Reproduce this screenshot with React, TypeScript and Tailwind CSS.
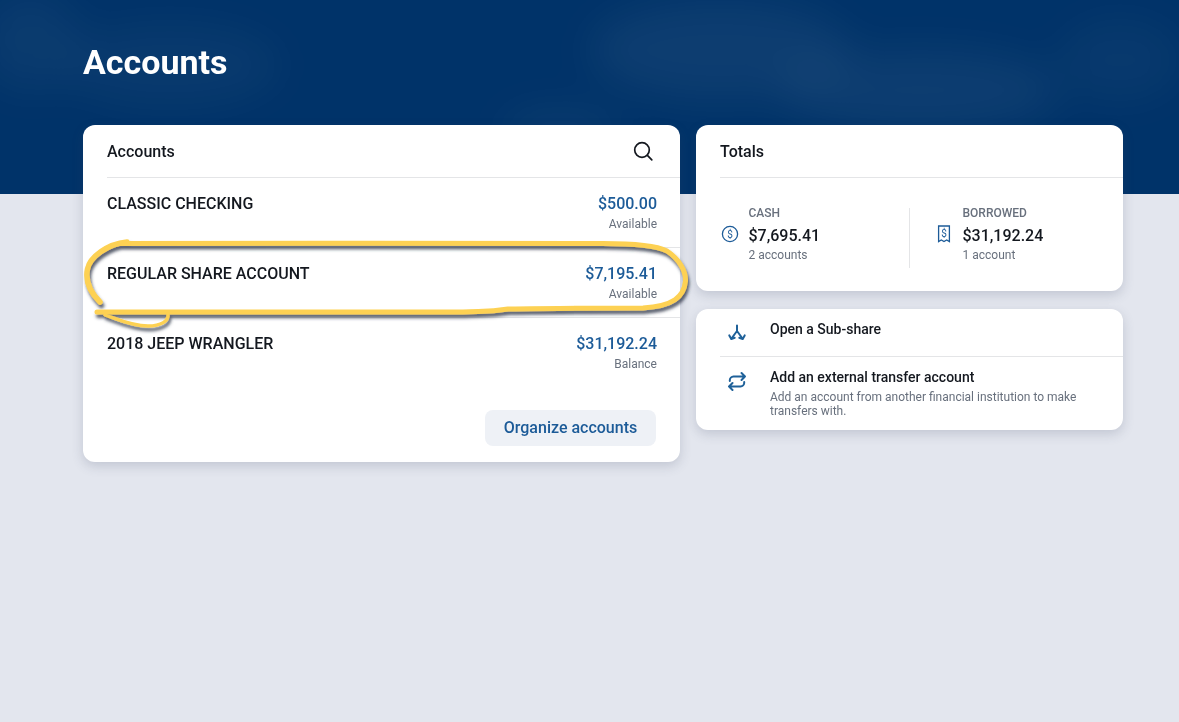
import React from "react";

function Row({ name, amount, label }: { name: string; amount: string; label: string }) {
  return (
    <div className="ml-6 h-[70px] border-b border-[#e4e5e7] last:border-b-0 pr-[23px] pt-[15px] flex justify-between">
      <div className="text-[16px] leading-[22px] font-medium text-[#14181f]">{name}</div>
      <div className="text-right">
        <div className="text-[16px] leading-[22px] font-medium text-[#1c5b98]">{amount}</div>
        <div className="text-[12px] leading-[18px] text-[#68707d]">{label}</div>
      </div>
    </div>
  );
}

function Total({ icon, title, amount, sub }: { icon: React.ReactNode; title: string; amount: string; sub: string }) {
  return (
    <div className="flex items-center mb-2">
      <div className="w-[28.5px] flex-none flex">{icon}</div>
      <div>
        <div className="text-[12px] leading-[16px] font-medium text-[#68707d]">{title}</div>
        <div className="text-[16px] leading-[22px] mt-1 font-medium text-[#14181f]">{amount}</div>
        <div className="text-[12px] leading-[16px] text-[#68707d]">{sub}</div>
      </div>
    </div>
  );
}

export default function App() {
  return (
    <div className="min-h-[722px] bg-[#e3e6ee] font-['Roboto',sans-serif] overflow-hidden">
      <div className="relative h-[194px] bg-[#003369] overflow-hidden">
        <svg className="absolute inset-0 w-full h-full" viewBox="0 0 1179 194" preserveAspectRatio="none" aria-hidden="true">
          <defs>
            <filter id="blur" x="-50%" y="-50%" width="200%" height="200%">
              <feGaussianBlur stdDeviation="20" />
            </filter>
          </defs>
          <g filter="url(#blur)" fill="#ffffff">
            <ellipse cx="170" cy="65" rx="110" ry="40" opacity="0.035" />
            <ellipse cx="30" cy="40" rx="50" ry="50" opacity="0.04" />
            <ellipse cx="720" cy="50" rx="130" ry="50" opacity="0.05" />
            <ellipse cx="920" cy="90" rx="140" ry="40" opacity="0.05" />
            <ellipse cx="1120" cy="60" rx="60" ry="40" opacity="0.03" />
            <ellipse cx="560" cy="130" rx="60" ry="22" opacity="0.04" />
          </g>
        </svg>
        <h1 className="relative ml-[83px] pt-[42px] text-[34px] leading-[40px] font-bold text-white">Accounts</h1>
      </div>

      <div className="relative mt-[-69px] ml-[83px] w-[1040px] flex items-start gap-4">
        <div className="relative w-[597px] h-[337px] bg-white rounded-xl shadow-[0_4px_12px_rgba(60,70,100,0.2)]">
          <div className="ml-6 h-[53px] pr-6 border-b border-[#e4e5e7] flex items-center justify-between">
            <span className="pt-[2px] text-[16px] font-medium text-[#14181f]">Accounts</span>
            <svg className="mr-px" width="24" height="24" viewBox="0 0 24 24" fill="none" stroke="#14181f" strokeWidth="1.7" strokeLinecap="round">
              <circle cx="11" cy="11" r="7.3" />
              <path d="M16.4 16.4l4.4 4.4" />
            </svg>
          </div>
          <div>
            <Row name="CLASSIC CHECKING" amount="$500.00" label="Available" />
            <Row name="REGULAR SHARE ACCOUNT" amount="$7,195.41" label="Available" />
            <Row name="2018 JEEP WRANGLER" amount="$31,192.24" label="Balance" />
          </div>
          <div className="mt-[22px] flex justify-end pr-6">
            <button className="w-[171px] h-9 rounded-lg bg-[#eef1f6] text-[16px] font-medium text-[#1c5b98]">Organize accounts</button>
          </div>
        </div>

        <div className="w-[427px] flex flex-col gap-[18px]">
          <div className="h-[166px] bg-white rounded-xl shadow-[0_4px_12px_rgba(60,70,100,0.2)]">
            <div className="ml-6 h-[53px] border-b border-[#e4e5e7] flex items-center">
              <span className="pt-[2px] text-[16px] font-medium text-[#14181f]">Totals</span>
            </div>
            <div className="mt-[30px] ml-6 flex h-[60px] items-center">
              <div className="w-[190px] border-r border-[#e4e5e7] h-full flex items-center">
                <Total
                  title="CASH"
                  amount="$7,695.41"
                  sub="2 accounts"
                  icon={
                    <svg className="ml-[1px]" width="18" height="18" viewBox="0 0 18 18" fill="none" stroke="#1c5b98" strokeWidth="1.3">
                      <circle cx="9" cy="9" r="7.6" />
                      <text x="9" y="12.6" textAnchor="middle" fontSize="10" fontFamily="Roboto" fill="#1c5b98" stroke="none">$</text>
                    </svg>
                  }
                />
              </div>
              <div className="ml-6 h-full flex items-center">
                <Total
                  title="BORROWED"
                  amount="$31,192.24"
                  sub="1 account"
                  icon={
                    <svg className="ml-[3px]" width="14" height="18" viewBox="0 0 14 18" fill="none" stroke="#1c5b98" strokeWidth="1.3">
                      <path d="M1.6 1h10.8v15.6l-2.7-1.6-2.7 1.6-2.7-1.6-2.7 1.6z" />
                      <text x="7" y="11.6" textAnchor="middle" fontSize="10" fontFamily="Roboto" fill="#1c5b98" stroke="none">$</text>
                    </svg>
                  }
                />
              </div>
            </div>
          </div>

          <div className="h-[121px] bg-white rounded-xl shadow-[0_4px_12px_rgba(60,70,100,0.2)]">
            <div className="ml-6 h-[48px] border-b border-[#e4e5e7] flex">
              <div className="w-[50px] flex-none pt-[14px] pl-[7px]">
                <svg width="20" height="20" viewBox="0 0 20 20" fill="none" stroke="#1f6199" strokeWidth="2" strokeLinecap="round" strokeLinejoin="round">
                  <path d="M10 2.5v5.5M10 8l-5.5 7.5M10 8l5.5 7.5" />
                  <path d="M2.3 12.4l2 3.6 3.4-1.2M17.7 12.4l-2 3.6-3.4-1.2" />
                </svg>
              </div>
              <div className="pt-[10px] text-[14px] leading-[20px] font-medium text-[#14181f]">Open a Sub-share</div>
            </div>
            <div className="ml-6 flex">
              <div className="w-[50px] flex-none pt-[14px] pl-[7px]">
                <svg width="20" height="20" viewBox="0 0 20 20" fill="none" stroke="#1f6199" strokeWidth="2" strokeLinecap="round" strokeLinejoin="round">
                  <path d="M14.5 2l3.5 3.5-3.5 3.5M18 5.5H6.5A3.8 3.8 0 0 0 2.8 9.3V10" />
                  <path d="M5.5 12l-3.5 3.5 3.5 3.5M2 15.5h11.5a3.8 3.8 0 0 0 3.7-3.8V11" />
                </svg>
              </div>
              <div className="pt-[10px] w-[330px]">
                <div className="text-[14px] leading-[20px] font-medium text-[#14181f]">Add an external transfer account</div>
                <div className="mt-[3px] text-[12px] leading-[14px] text-[#68707d]">Add an account from another financial institution to make transfers with.</div>
              </div>
            </div>
          </div>
        </div>

        <svg className="absolute left-0 top-[110px] pointer-events-none" width="620" height="100" viewBox="0 0 620 100" fill="none" aria-hidden="true">
          <defs>
            <filter id="sh" x="-5%" y="-20%" width="110%" height="150%">
              <feDropShadow dx="1.5" dy="3.5" stdDeviation="1.4" floodColor="#33384a" floodOpacity="0.8" />
            </filter>
          </defs>
          <g filter="url(#sh)" stroke="#fdd152" strokeLinecap="round" strokeLinejoin="round">
            <path d="M36 8.5 C 150 8, 400 8, 520 8.5 C 550 8.5, 572 10, 584 16 C 596 24, 603 36, 602.5 46 C 601 62, 590 71, 560 73 C 500 73, 470 73, 425 74 C 405 77, 400 76, 380 77 L 14 77" strokeWidth="5" />
            <path d="M44 7 C 24 9, 7 22, 4.5 34 C 2 46, 8 58, 17 67" strokeWidth="5.5" />
            <path d="M22 80 C 34 84, 48 91, 65 91 C 78 91, 86 86, 85 79" strokeWidth="3.4" />
          </g>
        </svg>
      </div>
    </div>
  );
}
